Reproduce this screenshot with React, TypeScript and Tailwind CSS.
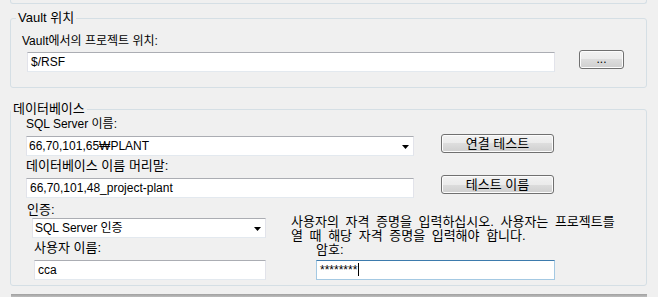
import React from "react";

const font = {
  fontFamily: '"Liberation Sans", "Noto Sans CJK KR", sans-serif',
};

function TextBox({
  value,
  className = "",
  focused = false,
}: {
  value: string;
  className?: string;
  focused?: boolean;
}) {
  const border = focused
    ? "border-[#a4c9e3] border-t-[#3d7bad]"
    : "border-[#e2e3ea] border-t-[#abadb3] border-b-[#e3e9ef]";
  return (
    <div
      className={`h-[20px] border bg-white pl-[3px] leading-[18px] text-[12px] ${border} ${className}`}
    >
      {value}
      {focused && <span className="ml-px inline-block h-[13px] w-px translate-y-[2px] bg-black" />}
    </div>
  );
}

function ComboBox({ value, className = "" }: { value: string; className?: string }) {
  return (
    <div
      className={`flex h-[20px] items-center justify-between border border-[#e2e3ea] border-t-[#abadb3] border-b-[#e3e9ef] bg-white pl-[2px] pr-[4px] text-[12px] leading-[18px] ${className}`}
    >
      <span>{value}</span>
      <svg width="7" height="4" viewBox="0 0 7 4" className="mt-[2px]">
        <path d="M0 0h7L3.5 4z" fill="#000" />
      </svg>
    </div>
  );
}

function Button({ label, className = "" }: { label: string; className?: string }) {
  return (
    <div
      className={`flex items-center justify-center rounded-[3px] border border-[#707070] bg-[linear-gradient(to_bottom,#f2f2f2_0%,#ebebeb_50%,#dddddd_50%,#cfcfcf_100%)] leading-none shadow-[inset_0_0_0_1px_#fcfcfc] ${className}`}
    >
      {label}
    </div>
  );
}

export default function App() {
  return (
    <div className="h-[297px] w-[658px] overflow-hidden bg-[#f0f0f0] text-[12px] text-black" style={font}>
      <div className="ml-[10px] h-[4px] w-[637px] rounded-b-[3px] border-x border-b border-[#d5dfe5]" />

      <fieldset className="mt-[7px] ml-[10px] h-[77px] w-[637px] rounded-[3px] border border-[#d5dfe5] p-0">
        <legend className="ml-[5px] px-[2px] text-[13px] leading-[14px]">Vault 위치</legend>
        <div className="pl-[11px] pt-[9px]">
          <div className="h-[14px] leading-[14px]">Vault에서의 프로젝트 위치:</div>
          <div className="mt-[4px] ml-[5px] flex items-start">
            <TextBox value="$/RSF" className="w-[528px]" />
            <Button label="..." className="ml-[24px] -mt-[2px] h-[19px] w-[45px] pb-[2px] text-[12px]" />
          </div>
        </div>
      </fieldset>

      <fieldset className="mt-[14px] ml-[10px] h-[184px] w-[637px] rounded-[3px] border border-[#d5dfe5] p-0">
        <legend className="px-[2px] text-[13px] leading-[14px]">데이터베이스</legend>
        <div className="flex pt-[1px] pl-[15px]">
          <div className="w-[388px]">
            <div className="h-[14px] leading-[14px]">SQL Server 이름:</div>
            <ComboBox value="66,70,101,65₩PLANT" className="mt-[5px]" />
            <div className="mt-[3px] h-[14px] text-[13px] leading-[14px]">데이터베이스 이름 머리말:</div>
            <TextBox value="66,70,101,48_project-plant" className="mt-[5px]" />
          </div>
          <div className="ml-[27px]">
            <Button label="연결 테스트" className="mt-[17px] h-[19px] w-[113px] text-[13px]" />
            <Button label="테스트 이름" className="mt-[22px] h-[19px] w-[113px] text-[13px]" />
          </div>
        </div>

        <div className="mt-[4px] flex">
          <div className="ml-[16px] w-[239px]">
            <div className="mt-[1px] h-[14px] text-[13px] leading-[14px]">인증:</div>
            <ComboBox value="SQL Server 인증" className="mt-[1px] ml-[5px] w-[234px]" />
            <div className="mt-[3px] ml-[7px] h-[14px] text-[13px] leading-[14px]">사용자 이름:</div>
            <TextBox value="cca" className="mt-[5px] ml-[7px] w-[232px]" />
          </div>
          <div className="ml-[25px]">
            <div className="mt-[13px] text-[13px] leading-[14px] [word-spacing:3px]">
              사용자의 자격 증명을 입력하십시오. 사용자는 프로젝트를
              <br />
              열 때 해당 자격 증명을 입력해야 합니다.
            </div>
            <div className="ml-[25px] h-[14px] text-[13px] leading-[14px]">암호:</div>
            <TextBox value="********" focused className="mt-[3px] ml-[25px] w-[239px]" />
          </div>
        </div>
      </fieldset>

      <div className="mt-[8px] ml-[11px] h-[3px] w-[636px] bg-[linear-gradient(to_bottom,#a0a0a0,#bdbdbd)]" />
    </div>
  );
}
